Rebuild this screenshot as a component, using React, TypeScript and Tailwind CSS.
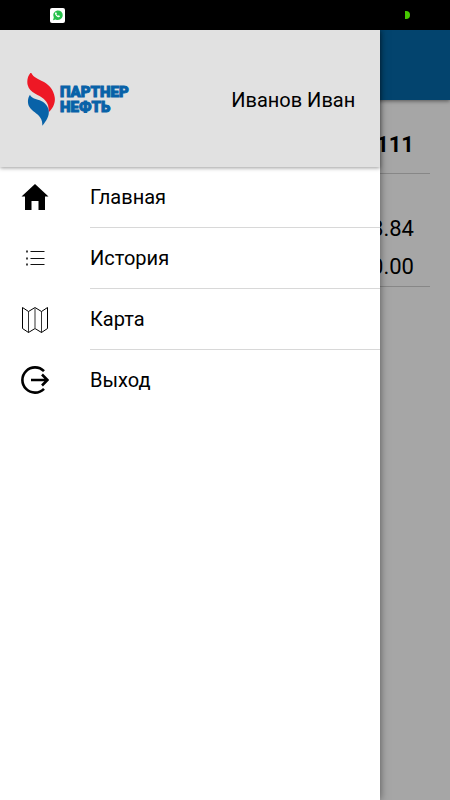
import type { ReactNode } from "react";

type MenuItem = {
  label: string;
  href: string;
  icon: ReactNode;
};

const MENU_ITEMS: MenuItem[] = [
  { label: "Главная", href: "#home", icon: <HomeIcon /> },
  { label: "История", href: "#history", icon: <ListIcon /> },
  { label: "Карта", href: "#map", icon: <MapIcon /> },
  { label: "Выход", href: "#exit", icon: <ExitIcon /> },
];

function HomeIcon() {
  return (
    <svg width="28" height="28" viewBox="0 0 28 28" aria-hidden="true">
      <path d="M14 0 0.5 12.500H4V26h6.500v-9h7v9H24V12.500h3.500z" />
    </svg>
  );
}

function ListIcon() {
  return (
    <svg width="28" height="28" viewBox="0 0 28 28" fill="none" stroke="#111" aria-hidden="true">
      <path d="M9.5 6.5h14M9.5 13.5h14M9.5 19.5h14" />
      <path d="M5.2 6.5h1.6M5.2 13.5h1.6M5.2 19.5h1.6" strokeWidth="1.8" />
    </svg>
  );
}

function MapIcon() {
  return (
    <svg width="28" height="28" viewBox="0 0 28 28" fill="none" stroke="#000" aria-hidden="true">
      <path d="M1.5 1.5 7.5 5.5 14 1.5 20.5 5.5 26.5 1.5V22.5L20.5 26.5 14 22.5 7.5 26.5 1.5 22.5z" />
      <path d="M7.5 5.5v21M20.5 5.5v21" strokeWidth="0.8" />
      <path d="M14 1.5v21" stroke="#777" strokeWidth="1.5" />
    </svg>
  );
}

function ExitIcon() {
  return (
    <svg width="28" height="28" viewBox="0 0 28 28" fill="none" stroke="#000" strokeWidth="2.6" aria-hidden="true">
      <path d="M23 5.2A12.6 12.6 0 1 0 23 22.8" />
      <path d="M10 14h16M21 8.5l5.5 5.5-5.5 5.5" />
    </svg>
  );
}

function Logo() {
  return (
    <div className="flex items-center gap-1">
      <svg width="30" height="54" viewBox="12 14 90 162" aria-hidden="true">
        <path
          d="M27 12C17 22 14 37 17 50C20 62 28 70 40 76C58 85 73 94 78 110C80 118 80 124 80 132C93 120 101 104 98 86C95 66 82 50 66 41C48 32 33 27 27 12z"
          fill="#ee1825"
        />
        <path
          d="M24 79C16 90 16 106 23 117C31 130 46 135 54 147C60 155 61 163 61 172C73 159 83 141 80 126C77 110 66 101 53 96C39 91 28 89 24 79z"
          fill="#0862a8"
        />
      </svg>
      <p className="text-[15px] leading-[15px] font-black text-[#0862a8] [-webkit-text-stroke:1px_#0862a8]">
        ПАРТНЕР
        <br />
        НЕФТЬ
      </p>
    </div>
  );
}

function StatusBar() {
  return (
    <div className="flex h-[30px] items-center justify-between bg-black pr-10 pl-[50px]">
      <svg width="15" height="15" viewBox="0 0 15 15" aria-hidden="true">
        <rect width="15" height="15" rx="2" fill="#fff" />
        <path d="M3 12.2l.8-2.6a4.8 4.8 0 1 1 1.8 1.8z" fill="#27c04b" />
        <path
          d="M5.3 4.5c-.7.9-.2 2.2 1 3.4s2.7 1.7 3.4.9l.3-.8-1.3-.7-.7.5c-.8-.3-1.3-.8-1.6-1.6l.5-.6-.6-1.2z"
          fill="#fff"
        />
      </svg>
      <svg width="5" height="8" viewBox="0 0 5 8" aria-hidden="true">
        <path d="M0 0h1a4 4 0 0 1 0 8H0z" fill="#46c800" />
      </svg>
    </div>
  );
}

function AccountPage() {
  return (
    <main className="flex-1 bg-white text-right text-[22px]">
      <div className="h-[70px] bg-[#0669a9] shadow-[0_1px_4px_rgba(0,0,0,.5)]" />
      <div className="mx-5">
        <p className="border-b border-[#d0d0d0] pt-7 pr-4 pb-3 leading-[33px] font-bold">111</p>
        <div className="border-b border-[#d0d0d0] pt-9 pr-4 leading-[38px]">
          <p>8.84</p>
          <p>0.00</p>
        </div>
      </div>
    </main>
  );
}

function Drawer() {
  return (
    <aside className="absolute inset-y-0 left-0 w-[84.5%] bg-white shadow-[0_0_8px_rgba(0,0,0,.5)]">
      <header className="flex h-[137px] items-center justify-between bg-[#e1e1e1] pt-0.5 pr-[25px] pl-[26px] shadow-[0_1px_4px_rgba(0,0,0,.4)]">
        <Logo />
        <p className="text-[20px]">Иванов Иван</p>
      </header>
      <nav>
        <ul className="[&>li:last-child_span]:border-0">
          {MENU_ITEMS.map((item) => (
            <li key={item.label}>
              <a href={item.href} className="flex items-center pl-[21px]">
                {item.icon}
                <span className="ml-[41px] flex-1 border-b border-[#d8d8d8] text-[20px] leading-[60px]">
                  {item.label}
                </span>
              </a>
            </li>
          ))}
        </ul>
      </nav>
    </aside>
  );
}

export default function App() {
  return (
    <div className="flex min-h-screen flex-col font-[Roboto,sans-serif] text-black">
      <StatusBar />
      <div className="relative flex flex-1 flex-col overflow-hidden">
        <AccountPage />
        <div className="absolute inset-0 bg-black/35" />
        <Drawer />
      </div>
    </div>
  );
}
